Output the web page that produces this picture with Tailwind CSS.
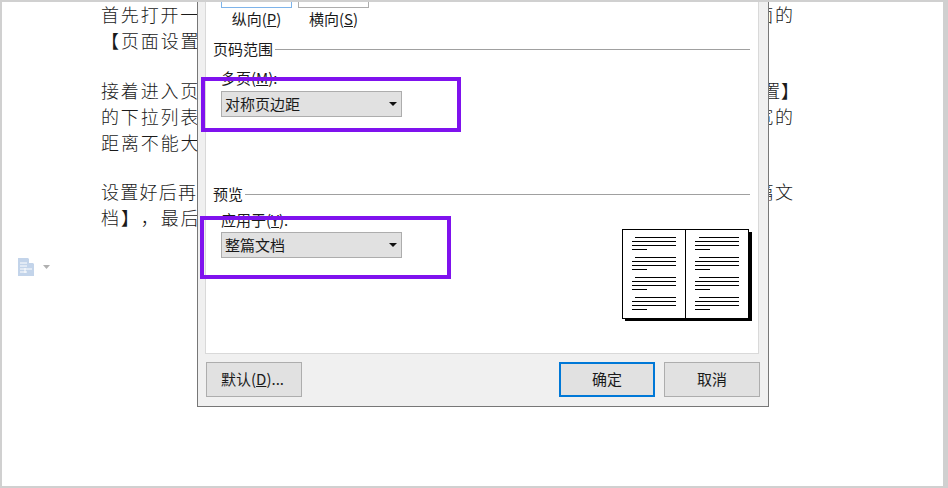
<!DOCTYPE html>
<html lang="zh"><head><meta charset="utf-8"><script src="https://cdn.jsdelivr.net/npm/@tailwindcss/browser@4"></script></head>
<body class="bg-white">
<div class="relative w-[948px] h-[488px] overflow-hidden bg-white border-t-2 border-l-2 border-b-2 border-r-[5px] border-[#d0d0d0] font-['Noto_Sans_CJK_SC',sans-serif] text-[#1a1a1a] [text-spacing-trim:space-all]">
  <div class="ml-[99px] -mt-px w-[692px] text-[18px] leading-[26px] font-light [text-align-last:justify]">
    <div class="mb-[24px]">
      <p>首先打开一篇文档，单击【布局】选项卡，页面设置组右下角按钮，弹出下面的</p>
      <p class="[text-align-last:left] tracking-[1.9px]">【页面设置】对话框。</p>
    </div>
    <div class="mb-[23px]">
      <p>接着进入页边距选项卡，单击页码范围组中多页，然后选择【对称页边距设<span class="relative left-[7px]">置</span><span class="relative left-[6px]">】</span></p>
      <p>的下拉列表中选择对称页边距，再设置好内外侧的边距数值，注意页内外边宽的</p>
      <p class="[text-align-last:left] tracking-[1.9px]">距离不能大于页面的宽度。</p>
    </div>
    <div>
      <p>设置好后再点开【预览】中应用于的下拉列表，并将其选择为下方的选项【整篇文</p>
      <p class="[text-align-last:left] tracking-[1.9px]">档】，最后单击【确定】按钮即可。</p>
    </div>
  </div>

  <div class="absolute left-[16px] top-[256px] flex items-center gap-[9px]">
    <svg width="16" height="18" viewBox="0 0 16 18"><path d="M0 0H10L16 6V18H0Z" fill="#c3d4ea"/><path d="M11 0L16 5H11Z" fill="#fff"/><path d="M2 5H9M2 8H9M2 11H14M2 14H9M7 10V15" stroke="#fff" stroke-width="1" fill="none"/></svg>
    <svg width="7" height="4" viewBox="0 0 7 4"><path d="M0 0H7L3.5 4Z" fill="#b0b0b0"/></svg>
  </div>

  <div class="absolute left-[195px] top-[-2px] w-[572px] h-[407px] bg-[#f0f0f0] border border-[#777] text-[15px] text-[#1a1a1a] flex flex-col">
    <div class="ml-[7px] mr-[9px] w-[554px] h-[353px] bg-white border border-[#d9d9d9] border-t-0 relative shrink-0">
      <div class="flex gap-[6px] ml-[15px]">
        <div class="w-[71px] h-[7px] border border-[#7eb4ea] bg-white"></div>
        <div class="w-[71px] h-[7px] border border-[#adadad] bg-white"></div>
      </div>
      <div class="flex gap-[6px] ml-[15px] mt-[1px] h-[20px] leading-[20px]">
        <span class="w-[71px] text-center">纵向(<span class="underline">P</span>)</span>
        <span class="w-[71px] text-center">横向(<span class="underline">S</span>)</span>
      </div>
      <div class="flex items-center ml-[7px] mr-[8px] mt-[10px] h-[20px]">
        <span class="pr-[2px]">页码范围</span><span class="flex-1 h-px bg-[#a0a0a0]"></span>
      </div>
      <div class="ml-[15px] mt-[9px] h-[20px] leading-[20px]">多页(<span class="underline">M</span>):</div>
      <div class="ml-[15px] w-[181px] h-[26px] mt-[3px] bg-[#e1e1e1] border border-[#adadad] flex items-center justify-between pl-[3px] pr-[4px]">
        <span>对称页边距</span>
        <svg width="8" height="4" viewBox="0 0 8 4"><path d="M0 0H8L4 4Z" fill="#111"/></svg>
      </div>
      <div class="flex items-center ml-[7px] mr-[8px] mt-[67px] h-[20px]">
        <span class="pr-[2px]">预览</span><span class="flex-1 h-px bg-[#a0a0a0]"></span>
      </div>
      <div class="ml-[15px] mt-[6px] h-[20px] leading-[20px]">应用于(<span class="underline">Y</span>):</div>
      <div class="flex items-start justify-between mr-[5px] mt-[2px]">
        <div class="ml-[15px] w-[181px] h-[26px] bg-[#e1e1e1] border border-[#adadad] flex items-center justify-between pl-[3px] pr-[4px]">
          <span>整篇文档</span>
          <svg width="8" height="4" viewBox="0 0 8 4"><path d="M0 0H8L4 4Z" fill="#111"/></svg>
        </div>
        <svg class="mt-[-3px]" width="131" height="93" viewBox="0 0 131 93" shape-rendering="crispEdges">
          <rect x="3" y="3" width="127" height="89" fill="#000"/>
          <rect x="0.5" y="0.5" width="126" height="89" fill="#fff" stroke="#000"/>
          <path d="M63.5 0V90" stroke="#000"/>
          <g stroke="#000" fill="none">
            <path d="M13 8.5H54M10 12.5H54M10 16.5H54M10 20.5H25"/>
            <path d="M13 28.5H54M10 32.5H54M10 36.5H54M10 40.5H25"/>
            <path d="M13 48.5H54M10 52.5H54M10 56.5H54M10 60.5H25"/>
            <path d="M13 68.5H54M10 72.5H54M10 76.5H54M10 80.5H25"/>
            <path d="M77 8.5H117M73 12.5H117M73 16.5H117M73 20.5H88"/>
            <path d="M77 28.5H117M73 32.5H117M73 36.5H117M73 40.5H88"/>
            <path d="M77 48.5H117M73 52.5H117M73 56.5H117M73 60.5H88"/>
            <path d="M77 68.5H117M73 72.5H117M73 76.5H117M73 80.5H88"/>
          </g>
        </svg>
      </div>
    </div>
    <div class="flex ml-[8px] mt-[8px] w-[554px]">
      <button class="w-[96px] h-[35px] bg-[#e1e1e1] border border-[#adadad] pr-[3px]">默认(<span class="underline">D</span>)...</button>
      <button class="ml-auto w-[96px] h-[35px] bg-[#e1e1e1] border-2 border-[#0078d7]">确定</button>
      <button class="ml-[9px] w-[96px] h-[35px] bg-[#e1e1e1] border border-[#adadad]">取消</button>
    </div>
  </div>

  <div class="absolute left-[199px] top-[75px] w-[260px] h-[55px] border-[4px] border-[#7f12ee]"></div>
  <div class="absolute left-[198px] top-[214px] w-[251px] h-[63px] border-[4px] border-[#7f12ee]"></div>
</div>
</body></html>
